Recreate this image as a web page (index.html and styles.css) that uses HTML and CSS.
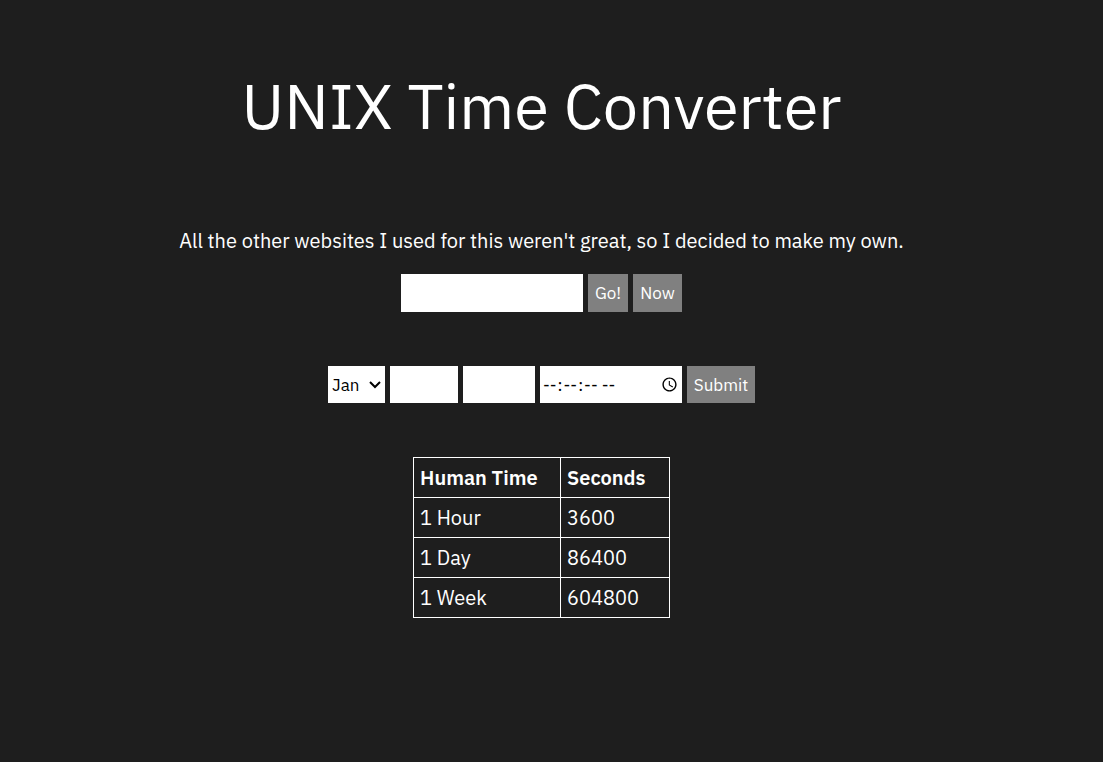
FILE: index.html
```html
<!DOCTYPE html>
<html lang="en">
<head>
<meta charset="utf-8">
<title>UNIX Time Converter</title>
<link rel="stylesheet" href="styles.css">
</head>
<body>
<main class="page">
  <h1 class="title">UNIX Time Converter</h1>
  <p class="intro">All the other websites I used for this weren't great, so I decided to make my own.</p>
  <form class="row">
    <input class="field stamp" type="text" aria-label="UNIX timestamp">
    <button class="button go" type="button">Go!</button>
    <button class="button now" type="button">Now</button>
  </form>
  <form class="row date-row">
    <span class="month-box">
      <select class="field month" aria-label="Month">
        <option>Jan</option><option>Feb</option><option>Mar</option><option>Apr</option>
        <option>May</option><option>Jun</option><option>Jul</option><option>Aug</option>
        <option>Sep</option><option>Oct</option><option>Nov</option><option>Dec</option>
      </select>
      <svg class="chevron" viewBox="0 0 12 8" aria-hidden="true"><path d="M1 1l5 5 5-5" fill="none" stroke="#000" stroke-width="2"/></svg>
    </span>
    <input class="field day" type="text" aria-label="Day">
    <input class="field year" type="text" aria-label="Year">
    <input class="field time" type="time" step="1" aria-label="Time">
    <button class="button submit" type="button">Submit</button>
  </form>
  <table class="units">
    <thead><tr><th class="human">Human Time</th><th>Seconds</th></tr></thead>
    <tbody>
      <tr><td>1 Hour</td><td>3600</td></tr>
      <tr><td>1 Day</td><td>86400</td></tr>
      <tr><td>1 Week</td><td>604800</td></tr>
    </tbody>
  </table>
</main>
</body>
</html>
```
FILE: styles.css
```css
* { box-sizing: border-box; }
body {
  margin: 0;
  background: #1e1e1e;
  color: #fff;
  font: 20px/26px "IBM Plex Sans", "Noto Sans", sans-serif;
}
.page {
  display: flex;
  flex-direction: column;
  align-items: center;
  padding: 64px 20px 64px 0;
}
.title { margin: 0; font-size: 63px; line-height: 82px; font-weight: 400; }
.intro { margin: 82px 0 20px; }
.row { display: flex; gap: 5px; height: 38px; margin-bottom: 54px; }
.date-row { height: 37px; }
.field, .button {
  height: 100%;
  border: 0;
  border-radius: 0;
  font: 17px "IBM Plex Sans", "Noto Sans", sans-serif;
}
.field { background: #fff; color: #000; }
.button { background: #808080; color: #fff; padding: 0; text-align: center; }
.stamp { width: 182px; }
.go { width: 40px; }
.now { width: 49px; }
.month-box { position: relative; display: flex; }
.month { width: 57px; padding: 0 4px; appearance: none; }
.chevron { position: absolute; right: 4px; top: 15px; width: 12px; height: 8px; pointer-events: none; }
.day { width: 68px; }
.year { width: 72px; }
.time { width: 142px; padding: 0 0 0 2px; }
.submit { width: 68px; }
.units { border-collapse: collapse; }
.units th, .units td {
  width: 109px;
  height: 40px;
  padding: 6px;
  border: 1px solid #fff;
  text-align: left;
}
.units th { font-weight: 600; }
.units .human { width: 147px; }
```
